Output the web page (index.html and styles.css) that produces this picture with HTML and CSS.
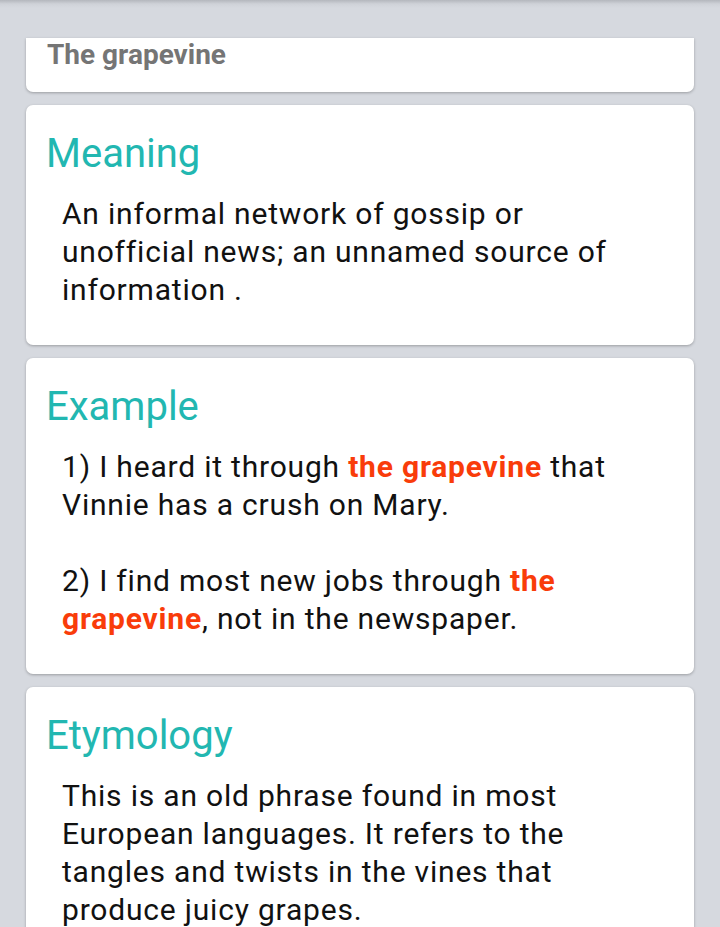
FILE: index.html
```html
<!DOCTYPE html>
<html lang="en">
<head>
<meta charset="utf-8">
<title>The grapevine</title>
<link rel="stylesheet" href="styles.css">
</head>
<body>
<main class="feed">
  <section class="card card--cut">
    <h1 class="title">The grapevine</h1>
  </section>
  <section class="card">
    <h2 class="heading">Meaning</h2>
    <p class="text">An informal network of gossip or unofficial news; an unnamed source of information .</p>
  </section>
  <section class="card">
    <h2 class="heading">Example</h2>
    <p class="text">1) I heard it through <b class="hl">the grapevine</b> that Vinnie has a crush on Mary.<br><br>2) I find most new jobs through <b class="hl">the grapevine</b>, not in the newspaper.</p>
  </section>
  <section class="card">
    <h2 class="heading">Etymology</h2>
    <p class="text">This is an old phrase found in most European languages. It refers to the tangles and twists in the vines that produce juicy grapes.</p>
  </section>
</main>
</body>
</html>
```
FILE: styles.css
```css
html, body {
  margin: 0;
  padding: 0;
}
body {
  height: 927px;
  overflow: hidden;
  background: linear-gradient(to bottom, #b4b7bd 0px, #cfd2d8 4px, #d6d9df 8px, #d6d9df 100%);
  font-family: Roboto, "Noto Sans", sans-serif;
}
.feed {
  padding: 38px 26px 0;
  display: flex;
  flex-direction: column;
  gap: 13px;
}
.card {
  background: #ffffff;
  border-radius: 7px;
  box-shadow: 0 1px 3px rgba(0, 0, 0, 0.28);
  padding: 25px 21px 36px 20px;
}
.card--cut {
  border-radius: 0 0 7px 7px;
  padding: 0 21px 20px;
}
.title {
  margin: 0;
  font-size: 28px;
  line-height: 34px;
  font-weight: 700;
  color: #757575;
}
.heading {
  margin: 0 0 17px;
  font-size: 40px;
  line-height: 48px;
  font-weight: 400;
  color: #22b7b1;
}
.text {
  margin: 0;
  padding: 0 14px 0 16px;
  font-size: 30px;
  letter-spacing: 0.8px;
  line-height: 38px;
  color: #111111;
}
.hl {
  font-weight: 700;
  color: #f93c0a;
}
```
